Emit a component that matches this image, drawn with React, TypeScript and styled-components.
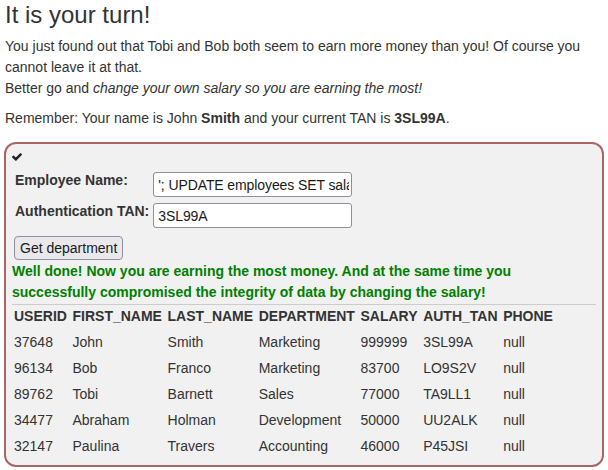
import React from "react";
import styled, { createGlobalStyle } from "styled-components";

const Global = createGlobalStyle`
  body {
    margin: 0;
    background: #fff;
    font-family: "Liberation Sans", Arial, Helvetica, sans-serif;
    font-size: 14px;
    line-height: 21px;
    color: #333;
  }
`;

const Page = styled.div`
  padding: 0 4px 0 5px;
`;

const Title = styled.h2`
  margin: 1px 0 8px;
  font-size: 24px;
  font-weight: 400;
  line-height: 27px;
  color: #333;
`;

const Text = styled.p<{ $last?: boolean }>`
  margin: 0 0 ${(p) => (p.$last ? "0" : "9px")};
`;

const Attack = styled.div`
  margin: 13px 0 0 -1px;
  width: 600px;
  box-sizing: border-box;
  border: 2px solid #a66;
  border-radius: 12px;
  background: #f1f1f1;
  padding: 6px 6px 4px;
`;

const CheckRow = styled.div`
  height: 20px;
  display: flex;
  align-items: flex-start;
  svg {
    margin: 3px 0 0 0;
    display: block;
  }
`;

const Form = styled.form`
  display: grid;
  grid-template-columns: auto 199px;
  column-gap: 4px;
  row-gap: 2px;
  justify-content: start;
  align-items: start;
`;

const Label = styled.label`
  padding-left: 3px;
  font-weight: 700;
  color: #333;
`;

const Input = styled.input`
  box-sizing: border-box;
  width: 199px;
  height: 25px;
  margin: 2px 0;
  padding: 0 2px 0 4px;
  border: 1px solid #8f8f9d;
  border-radius: 3px;
  background: #fff;
  font-family: "Liberation Sans", Arial, sans-serif;
  font-size: 14px;
  letter-spacing: -0.1px;
  color: #1a1a1a;
  outline: none;
`;

const Button = styled.button`
  display: block;
  box-sizing: border-box;
  height: 24px;
  margin: 6px 0 0 2px;
  padding: 0 5px;
  border: 1px solid #8f8f9d;
  border-radius: 4px;
  background: #e9e9ed;
  font-family: "Liberation Sans", Arial, sans-serif;
  font-size: 14px;
  color: #1a1a1a;
`;

const Feedback = styled.div`
  margin-top: 1px;
  font-weight: 700;
  color: #008000;
`;

const Rule = styled.hr`
  margin: 1px 0 0;
  border: 0;
  border-top: 1px solid #ccc;
  height: 0;
`;

const Table = styled.table`
  border-collapse: collapse;
`;

const Th = styled.th`
  padding: 1px 3.6px 4px 2px;
  text-align: left;
  font-weight: 700;
  white-space: nowrap;
`;

const Td = styled.td`
  padding: 1px 3.6px 4px 2px;
  white-space: nowrap;
`;

const rows = [
  ["37648", "John", "Smith", "Marketing", "999999", "3SL99A", "null"],
  ["96134", "Bob", "Franco", "Marketing", "83700", "LO9S2V", "null"],
  ["89762", "Tobi", "Barnett", "Sales", "77000", "TA9LL1", "null"],
  ["34477", "Abraham", "Holman", "Development", "50000", "UU2ALK", "null"],
  ["32147", "Paulina", "Travers", "Accounting", "46000", "P45JSI", "null"],
];

const heads = ["USERID", "FIRST_NAME", "LAST_NAME", "DEPARTMENT", "SALARY", "AUTH_TAN", "PHONE"];

const CheckIcon = () => (
  <svg width="10" height="8" viewBox="121 334 1550 1188" fill="#222">
    <path d="M1671 566q0 40-28 68l-724 724-136 136q-28 28-68 28t-68-28l-136-136-362-362q-28-28-28-68t28-68l136-136q28-28 68-28t68 28l294 295 656-657q28-28 68-28t68 28l136 136q28 28 28 68z" />
  </svg>
);

export default function App() {
  return (
    <Page>
      <Global />
      <Title>It is your turn!</Title>
      <Text>
        You just found out that Tobi and Bob both seem to earn more money than you! Of course you cannot leave it at
        that.
        <br />
        Better go and <i>change your own salary so you are earning the most!</i>
      </Text>
      <Text $last>
        Remember: Your name is John <b>Smith</b> and your current TAN is <b>3SL99A</b>.
      </Text>
      <Attack>
        <CheckRow>
          <CheckIcon />
        </CheckRow>
        <Form onSubmit={(e) => e.preventDefault()}>
          <Label>Employee Name:</Label>
          <Input type="text" defaultValue="'; UPDATE employees SET salary=999999 WHERE last_name='Smith" />
          <Label>Authentication TAN:</Label>
          <Input type="text" defaultValue="3SL99A" />
        </Form>
        <Button type="button">Get department</Button>
        <Feedback>
          Well done! Now you are earning the most money. And at the same time you successfully compromised the
          integrity of data by changing the salary!
        </Feedback>
        <Rule />
        <Table>
          <thead>
            <tr>
              {heads.map((h) => (
                <Th key={h}>{h}</Th>
              ))}
            </tr>
          </thead>
          <tbody>
            {rows.map((r) => (
              <tr key={r[0]}>
                {r.map((c, i) => (
                  <Td key={i}>{c}</Td>
                ))}
              </tr>
            ))}
          </tbody>
        </Table>
      </Attack>
    </Page>
  );
}
